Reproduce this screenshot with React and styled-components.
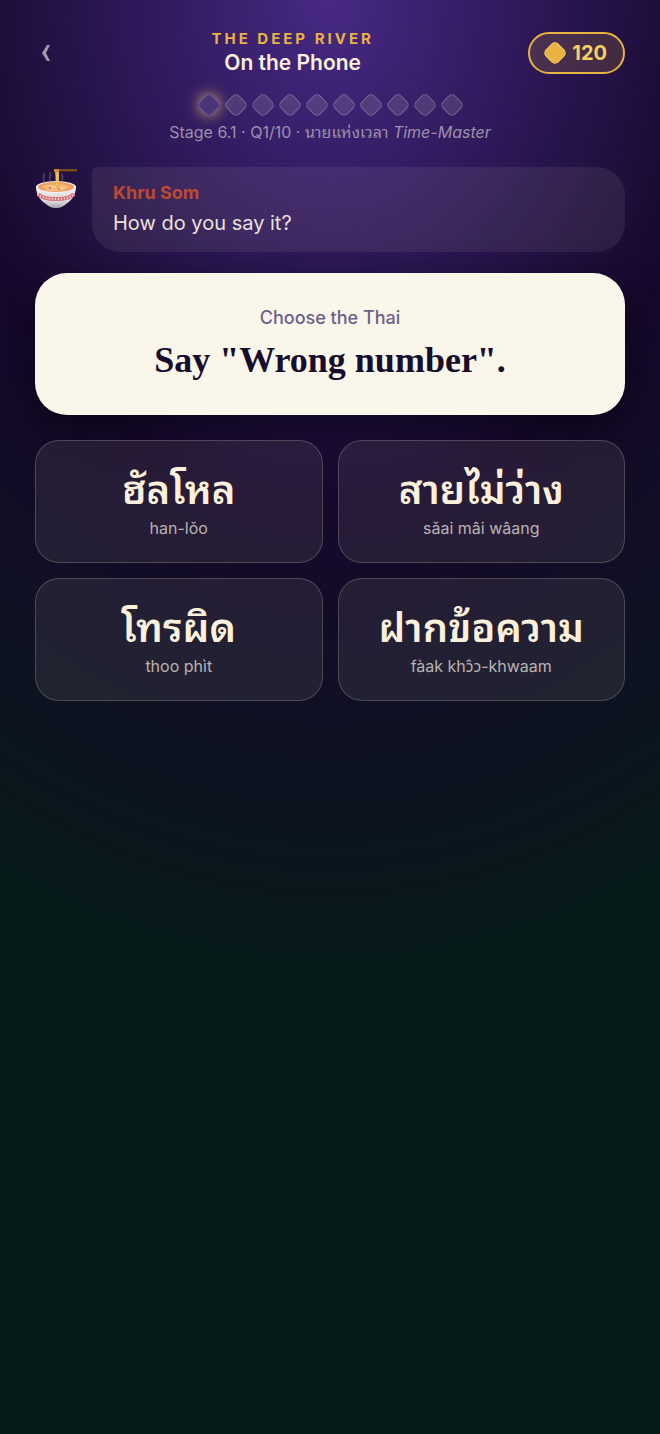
import React from 'react';
import styled, { createGlobalStyle, css } from 'styled-components';

const colors = {
  cream: '#faf0dc',
  paper: '#faf6e9',
  ink: '#170d2c',
  gold: '#e9b341',
  goldLight: '#f7cd66',
  muted: '#b9b3b4',
  rust: '#bb4a30',
  violet: '#6c5f8a',
};

const thaiFaces = '"Noto Sans Thai Looped", "Sarabun", "Loma", "Garuda", "Waree"';
const sans = `"Inter", ${thaiFaces}, "Noto Sans", sans-serif`;
const serif = '"Liberation Serif", serif';

const GlobalStyle = createGlobalStyle`
  * {
    box-sizing: border-box;
  }

  body {
    margin: 0;
    background: #061c19;
    color: ${colors.cream};
    font-family: ${sans};
  }

  button {
    font: inherit;
    color: inherit;
    cursor: pointer;
  }
`;

const Screen = styled.main`
  display: flex;
  flex-direction: column;
  min-height: 100vh;
  padding: 29px 35px;
  background: radial-gradient(120% 70% at 50% 0%, #472985 0%, #16082b 50%, #061c19 100%);
`;

const TopBar = styled.header`
  display: flex;
  align-items: center;
  justify-content: space-between;
`;

const BackButton = styled.button`
  width: 22px;
  height: 40px;
  padding: 0;
  border: 0;
  background: none;
  color: #a297ab;

  svg {
    display: block;
    margin: auto;
  }
`;

const Titles = styled.div`
  text-align: center;
`;

const Chapter = styled.div`
  color: ${colors.gold};
  font-size: 15px;
  font-weight: 700;
  line-height: 20px;
  letter-spacing: 3px;
  text-transform: uppercase;
`;

const LessonName = styled.h1`
  margin: 0;
  font-size: 21px;
  font-weight: 600;
  line-height: 28px;
`;

const Coins = styled.div`
  display: flex;
  align-items: center;
  gap: 8px;
  height: 42px;
  padding: 0 16px;
  border: 2px solid ${colors.gold};
  border-radius: 21px;
  background: rgba(233, 179, 65, 0.16);
  color: ${colors.goldLight};
  font-size: 20px;
  font-weight: 700;
`;

const gemShape = css`
  width: 18px;
  height: 18px;
  border-radius: 5px;
  transform: rotate(45deg);
`;

const CoinGem = styled.span`
  ${gemShape}
  background: ${colors.gold};
  border: 1px solid ${colors.goldLight};
`;

const Steps = styled.div`
  display: flex;
  justify-content: center;
  gap: 9px;
  margin-top: 19px;
`;

const Step = styled.span`
  ${gemShape}
  background: rgba(250, 240, 220, 0.13);
  border: 1px solid rgba(250, 240, 220, 0.24);
  ${({ $current }) => $current && css`
    background: #4a3677;
    border-color: #6658a4;
    box-shadow: 0 0 14px rgba(247, 205, 102, 0.85);
  `}
`;

const StageLine = styled.p`
  margin: 6px 0 0;
  color: #9c90ab;
  font-size: 16px;
  line-height: 24px;
  text-align: center;
`;

const Coach = styled.section`
  display: flex;
  gap: 14px;
  margin-top: 23px;
`;

const Bubble = styled.div`
  flex: 1;
  padding: 12px 21px;
  border-radius: 6px 28px 28px 28px;
  background: rgba(250, 240, 220, 0.08);
`;

const CoachName = styled.div`
  color: ${colors.rust};
  font-size: 18px;
  font-weight: 700;
  line-height: 28px;
`;

const CoachLine = styled.div`
  color: #e9e0dc;
  font-size: 20px;
  line-height: 33px;
`;

const Question = styled.section`
  margin-top: 21px;
  padding: 32px 24px;
  border-radius: 32px;
  background: ${colors.paper};
  box-shadow: 0 14px 42px rgba(0, 0, 0, 0.45);
  text-align: center;
`;

const Hint = styled.div`
  color: ${colors.violet};
  font-size: 18px;
  font-weight: 500;
  line-height: 26px;
`;

const Prompt = styled.h2`
  margin: 6px 0 0;
  color: ${colors.ink};
  font-family: ${serif};
  font-size: 36px;
  font-weight: 700;
  line-height: 46px;
`;

const Answers = styled.div`
  display: grid;
  grid-template-columns: 1fr 1fr;
  gap: 15px;
  margin-top: 25px;
`;

const Answer = styled.button`
  display: flex;
  flex-direction: column;
  align-items: center;
  height: 123px;
  padding: 22px 12px;
  border: 1px solid rgba(250, 240, 220, 0.2);
  border-radius: 24px;
  background: rgba(250, 240, 220, 0.08);
`;

const Thai = styled.span`
  color: ${colors.cream};
  font-size: 40px;
  font-weight: 600;
  line-height: 54px;
`;

const Romanised = styled.span`
  color: ${colors.muted};
  font-size: 16px;
  line-height: 22px;
`;

// Inter puts the tone mark on the wrong side of an open o
const OpenVowel = styled.span`
  font-family: "Noto Sans", "DejaVu Sans", sans-serif;
`;

const answers = [
  { thai: 'ฮัลโหล', roman: 'han-lǒo' },
  { thai: 'สายไม่ว่าง', roman: 'sǎai mâi wâang' },
  { thai: 'โทรผิด', roman: 'thoo phìt' },
  { thai: 'ฝากข้อความ', roman: <>fàak kh<OpenVowel>ɔ̂ɔ</OpenVowel>-khwaam</> },
];

const steps = Array.from({ length: 10 }, (_, i) => i);

const NoodleBowl = () => (
  <svg width="43" height="43" viewBox="0 0 43 43" aria-hidden="true">
    <defs>
      <linearGradient id="china" x1="0" y1="0" x2="0" y2="1">
        <stop offset="0" stopColor="#f2eff0" />
        <stop offset="0.7" stopColor="#dddadd" />
        <stop offset="1" stopColor="#aaa5ad" />
      </linearGradient>
      <radialGradient id="broth">
        <stop offset="0" stopColor="#f6c98d" />
        <stop offset="1" stopColor="#ee9a58" />
      </radialGradient>
    </defs>
    <path d="M1 19c0 9 4 14 10 18 2 2 5 4 10 4s8-2 10-4c6-4 10-9 10-18z" fill="url(#china)" />
    <ellipse cx="21" cy="20" rx="20" ry="6" fill="#f5f2f1" />
    <ellipse cx="21" cy="20" rx="18" ry="5" fill="url(#broth)" />
    <path d="M8 20q6-3 12 0t12-1M11 22q9 3 19 0" stroke="#f9dda8" fill="none" opacity="0.7" />
    <circle cx="24" cy="22" r="1" fill="#d9693c" />
    <circle cx="15" cy="21" r="1" fill="#d9693c" />
    <path d="M3 27q4 5 18 5t18-5" stroke="#d9777c" strokeWidth="4" fill="none" />
    <path d="M3 27q4 5 18 5t18-5" stroke="#f0dcdd" strokeWidth="2" strokeDasharray="1 2" fill="none" />
    <path
      d="M9 14c-2-3 1-4 0-7M15 13c-2-3 2-4 0-7M27 13c2-3-1-4 0-6"
      stroke="#a9a0b5"
      strokeWidth="2"
      strokeLinecap="round"
      fill="none"
      opacity="0.3"
    />
    <path d="M20 3h4v17q-2 2-3 0z" fill="#e0b040" />
    <path d="M22 6v13" stroke="#f5d776" />
    <path d="M24 2h18v2H24z" fill="#7a4b22" />
    <path d="M24 4h18v1H24z" fill="#4c2a16" />
    <path d="M19 2h5v3h-5z" fill="#c58c35" />
  </svg>
);

const App = () => (
  <>
    <GlobalStyle />
    <Screen>
      <TopBar>
        <BackButton aria-label="Back">
          <svg width="10" height="16" viewBox="0 0 10 16">
            <path d="M6 0h3L5 8l4 8H6L1 8z" fill="currentColor" />
          </svg>
        </BackButton>
        <Titles>
          <Chapter>The Deep River</Chapter>
          <LessonName>On the Phone</LessonName>
        </Titles>
        <Coins>
          <CoinGem />
          120
        </Coins>
      </TopBar>

      <Steps>
        {steps.map(i => <Step key={i} $current={i === 0} />)}
      </Steps>
      <StageLine>
        Stage 6.1 · Q1/10 · นายแห่งเวลา <em>Time-Master</em>
      </StageLine>

      <Coach>
        <NoodleBowl />
        <Bubble>
          <CoachName>Khru Som</CoachName>
          <CoachLine>How do you say it?</CoachLine>
        </Bubble>
      </Coach>

      <Question>
        <Hint>Choose the Thai</Hint>
        <Prompt>Say "Wrong number".</Prompt>
      </Question>

      <Answers>
        {answers.map(({ thai, roman }) => (
          <Answer key={thai}>
            <Thai lang="th">{thai}</Thai>
            <Romanised>{roman}</Romanised>
          </Answer>
        ))}
      </Answers>
    </Screen>
  </>
);

export default App;
